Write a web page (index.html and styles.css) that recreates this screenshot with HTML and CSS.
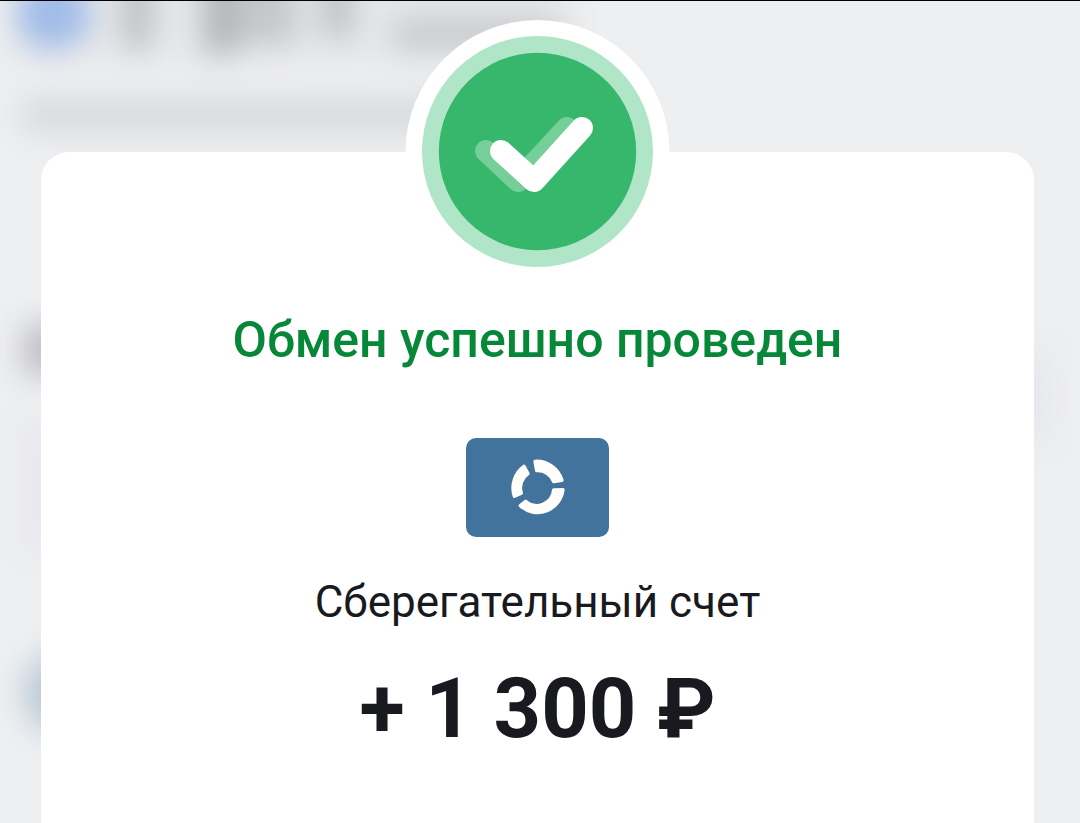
FILE: index.html
```html
<!DOCTYPE html>
<html lang="ru">
<head>
    <meta charset="UTF-8">
    <meta name="viewport" content="width=device-width, initial-scale=1">
    <title>Обмен успешно проведен</title>
    <link rel="stylesheet" href="styles.css">
</head>
<body>
<!-- размытый экран под карточкой -->
<div class="backdrop" aria-hidden="true">
    <svg class="blur-left" width="720" height="823" viewBox="0 0 720 823">
        <defs>
            <filter id="soft" filterUnits="userSpaceOnUse" x="-100" y="-120" width="900" height="1000" color-interpolation-filters="sRGB">
                <feGaussianBlur stdDeviation="15"/>
            </filter>
        </defs>
        <g filter="url(#soft)">
            <rect x="10" y="-60" width="560" height="120" fill="#e5e6e8"/>
            <circle cx="53" cy="12" r="37" fill="#a0bce8"/>
            <rect x="126" y="-40" width="22" height="88" fill="#b2b4b6"/>
            <rect x="205" y="-40" width="30" height="94" fill="#b0b1b5"/>
            <rect x="236" y="-40" width="60" height="84" fill="#c6c7cb"/>
            <rect x="324" y="-50" width="26" height="86" fill="#babbbf"/>
            <rect x="394" y="18" width="166" height="32" fill="#c8cace"/>
            <rect x="22" y="96" width="430" height="36" fill="#d8dadd"/>
            <rect x="24" y="324" width="90" height="50" fill="#bcbcc3"/>
            <rect x="22" y="420" width="90" height="130" fill="#e7e8ed"/>
            <circle cx="66" cy="692" r="42" fill="#b8c8d5"/>
        </g>
    </svg>
    <span class="blur-right"></span>
</div>

<main class="card">
    <div class="badge">
        <svg width="263" height="264" viewBox="0 0 263 264" aria-hidden="true">
            <circle cx="131.5" cy="132" r="132" fill="#fff"/>
            <circle cx="131.5" cy="131.5" r="115.5" fill="#b0e5c8"/>
            <circle cx="131.5" cy="131.5" r="98.7" fill="#36b76b"/>
            <g fill="none" stroke-width="22" stroke-linecap="round" stroke-linejoin="round">
                <path d="M80 131L112 161L161 108" stroke="#76cf98"/>
                <path d="M95 131L128 161L176 108" stroke="#fff"/>
            </g>
        </svg>
    </div>
    <h1>Обмен успешно проведен</h1>
    <div class="account-icon">
        <svg width="60" height="60" viewBox="172 98 180 180" aria-hidden="true">
            <g fill="#fffefa" stroke="#fffefa" stroke-width="10" stroke-linejoin="round">
                <path d="M253 108A80 80 0 0 1 334 165L309 169A51 51 0 0 0 258 136Z"/>
                <path d="M337 193A77 79 0 0 1 209 241L225 228A51 51 0 0 0 309 194Z"/>
                <path d="M220 123A77 79 0 0 0 191 213L212 204A51 51 0 0 1 232 145Z"/>
            </g>
        </svg>
    </div>
    <p class="account">Сберегательный счет</p>
    <p class="amount">+ 1 300 ₽</p>
</main>
</body>
</html>
```
FILE: styles.css
```css
* {
    box-sizing: border-box;
    margin: 0;
    padding: 0;
}

body {
    display: flex;
    min-height: 100vh;
    padding: 151px 46px 0 41px;
    border-top: 1px solid #000;
    background: #eeeff1;
    font-family: Roboto, "Noto Sans", sans-serif;
    color: #191a20;
}

.backdrop {
    position: absolute;
    top: 1px;
    right: 0;
    bottom: 0;
    left: 0;
    overflow: hidden;
}

.blur-left {
    position: absolute;
    top: 0;
    left: 0;
}

.blur-right {
    position: absolute;
    top: 350px;
    right: 32px;
    width: 40px;
    height: 90px;
    background: #e4e6ec;
    filter: blur(16px);
}

.card {
    position: relative;
    display: flex;
    flex: 1;
    flex-direction: column;
    align-items: center;
    padding: 0 24px 80px;
    border-radius: 28px 28px 0 0;
    background: #fff;
    text-align: center;
}

/* кружок наполовину выходит за верхний край карточки */
.badge {
    height: 264px;
    margin-top: -132px;
}

.badge svg,
.account-icon svg {
    display: block;
    overflow: visible;
}

h1 {
    margin-top: 26px;
    font-size: 50px;
    font-weight: 500;
    line-height: 60px;
    color: #078838;
}

.account-icon {
    display: flex;
    align-items: center;
    justify-content: center;
    width: 143px;
    height: 99px;
    margin-top: 68px;
    border-radius: 10px;
    background: #42739d;
}

.account {
    margin-top: 39px;
    font-size: 44px;
    line-height: 52px;
}

.amount {
    margin-top: 31px;
    font-size: 83px;
    font-weight: 700;
    line-height: 100px;
}
```
